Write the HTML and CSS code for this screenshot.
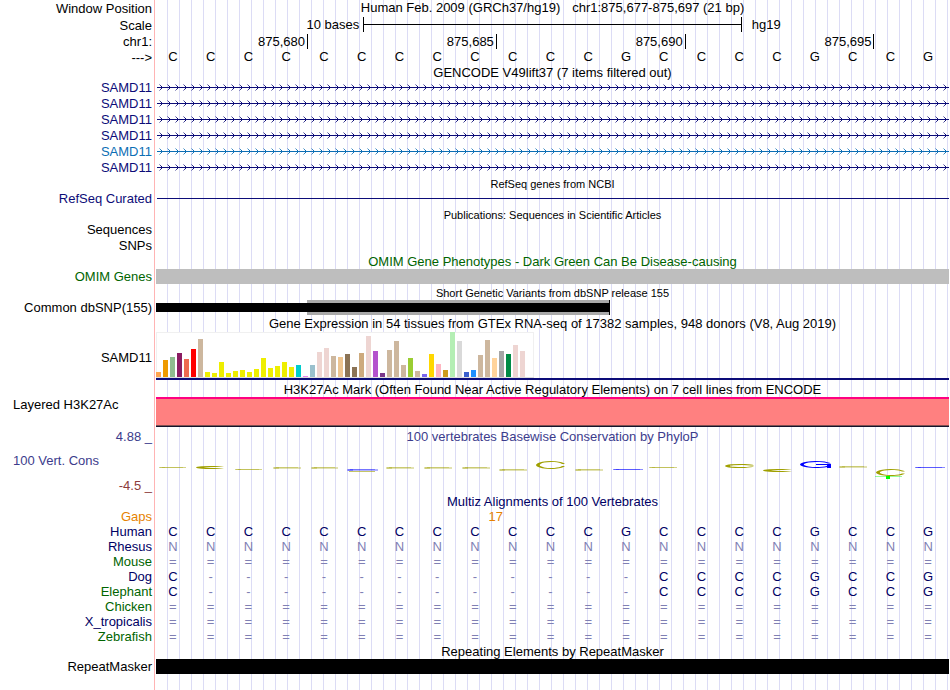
FILE: index.html
```html
<!DOCTYPE html>
<html lang="en">
<head>
    <meta charset="UTF-8">
    <meta name="viewport" content="width=device-width, initial-scale=1.0">
    <title>Human chr1:875,677-875,697</title>
    <link rel="stylesheet" href="styles.css">
</head>
<body>
    <main class="browser">
        <div class="row ruler">
            <div class="label">Window Position</div>
            <div class="title position"><span>Human Feb. 2009 (GRCh37/hg19)</span><span>chr1:875,677-875,697 (21 bp)</span></div>
        </div>
        <div class="row ruler">
            <div class="label">Scale</div>
            <div class="scale">
                <span class="scale-text">10 bases</span>
                <span class="scale-bar"></span>
                <span class="scale-db">hg19</span>
            </div>
        </div>
        <div class="row coords-row">
            <div class="label">chr1:</div>
            <div class="cells coords">
                <span class="first">875,680</span>
                <span>875,685</span>
                <span>875,690</span>
                <span>875,695</span>
            </div>
        </div>
        <div class="row bases-row">
            <div class="label">---&gt;</div>
            <div class="cells" data-seq="CCCCCCCCCCCCGCCCCGCCG"></div>
        </div>

        <div class="row short"><div class="title">GENCODE V49lift37 (7 items filtered out)</div></div>
        <div id="genes"></div>

        <div class="row short"><div class="title small">RefSeq genes from NCBI</div></div>
        <div class="row">
            <div class="label navy">RefSeq Curated</div>
            <div class="intron"></div>
        </div>

        <div class="row short"><div class="title small">Publications: Sequences in Scientific Articles</div></div>
        <div class="row"><div class="label">Sequences</div></div>
        <div class="row"><div class="label">SNPs</div></div>

        <div class="row short"><div class="title green">OMIM Gene Phenotypes - Dark Green Can Be Disease-causing</div></div>
        <div class="row">
            <div class="label green">OMIM Genes</div>
            <div class="block omim"></div>
        </div>

        <div class="row short"><div class="title small">Short Genetic Variants from dbSNP release 155</div></div>
        <div class="row">
            <div class="label">Common dbSNP(155)</div>
            <div class="cells snps">
                <div class="snp-range"></div>
                <div class="snp"></div>
            </div>
        </div>

        <div class="row"><div class="title">Gene Expression in 54 tissues from GTEx RNA-seq of 17382 samples, 948 donors (V8, Aug 2019)</div></div>
        <div class="row gtex-row">
            <div class="label">SAMD11</div>
            <div class="gtex"><div class="bars" id="bars"></div></div>
        </div>

        <div class="row short"><div class="title">H3K27Ac Mark (Often Found Near Active Regulatory Elements) on 7 cell lines from ENCODE</div></div>
        <div class="row h3k-row">
            <div class="label left">Layered H3K27Ac</div>
            <div class="h3k"></div>
        </div>

        <div class="row short">
            <div class="label cons">4.88 _</div>
            <div class="title cons">100 vertebrates Basewise Conservation by PhyloP</div>
        </div>
        <div class="row cons-row">
            <div class="cons-labels">
                <div class="label left cons">100 Vert. Cons</div>
                <div class="label low">-4.5 _</div>
            </div>
            <svg class="logo" id="logo" viewBox="0 0 793 50" preserveAspectRatio="none"></svg>
        </div>

        <div class="row short"><div class="title dark">Multiz Alignments of 100 Vertebrates</div></div>
        <div class="row short">
            <div class="label orange">Gaps</div>
            <div class="cells"><span class="gap-count">17</span></div>
        </div>
        <div id="alignments"></div>

        <div class="row short"><div class="title">Repeating Elements by RepeatMasker</div></div>
        <div class="row">
            <div class="label">RepeatMasker</div>
            <div class="block repeat"></div>
        </div>
    </main>

    <script>
        const svgNS = 'http://www.w3.org/2000/svg';

        function fillCells(container, seq) {
            for (const base of seq) {
                const cell = document.createElement('span');
                cell.textContent = base;
                if (!'CG'.includes(base)) cell.className = 'faint';
                container.appendChild(cell);
            }
        }

        document.querySelectorAll('[data-seq]').forEach(el => fillCells(el, el.dataset.seq));

        // Transcripts: the colour class is shared by the label and the intron line
        const genes = document.getElementById('genes');
        ['navy', 'navy', 'navy', 'navy', 'blue', 'navy'].forEach((color, i) => {
            genes.insertAdjacentHTML('beforeend', `
                <div class="row ${color}">
                    <div class="label">SAMD11</div>
                    <svg class="transcript" shape-rendering="crispEdges">
                        <pattern id="arrow${i}" width="8" height="16" patternUnits="userSpaceOnUse">
                            <path d="M5 6h1v1h-1zM5 8h1v1h-1zM6 7h1v1h-1z" fill="currentColor"/>
                            <path d="M4 5h1v1h-1zM4 9h1v1h-1z" fill="currentColor" opacity="0.8"/>
                            <path d="M3 4h1v1h-1zM3 10h1v1h-1z" fill="currentColor" opacity="0.4"/>
                        </pattern>
                        <rect x="1" y="7" width="100%" height="1" fill="currentColor"/>
                        <rect width="100%" height="16" fill="url(#arrow${i})"/>
                    </svg>
                </div>`);
        });

        // Median expression per tissue: [height, colour]
        const tissues = [
            [5, '#ffa54f'], [17, '#ee9a00'], [20, '#8fbc8f'], [24, '#8b1c62'], [18, '#ee6a50'], [28, '#ff0000'],
            [38, '#cdb79e'], [5, '#eeee00'], [4, '#eeee00'], [15, '#eeee00'], [4, '#eeee00'], [6, '#eeee00'],
            [7, '#eeee00'], [5, '#eeee00'], [8, '#eeee00'], [19, '#eeee00'], [9, '#eeee00'], [11, '#eeee00'],
            [15, '#eeee00'], [10, '#eeee00'], [12, '#00cdcd'], [1, '#ee82ee'], [12, '#9ac0cd'], [25, '#eed5d2'],
            [29, '#eed5d2'], [21, '#cdb79e'], [20, '#eec591'], [23, '#8b7355'], [10, '#8b7355'], [24, '#cdaa7d'],
            [41, '#eed5d2'], [26, '#b452cd'], [4, '#7a378b'], [27, '#cdb79e'], [36, '#cdb79e'], [12, '#cdb79e'],
            [19, '#9acd32'], [6, '#cdb79e'], [3, '#7a67ee'], [23, '#ffd700'], [13, '#ffb6c1'], [7, '#cd9b1d'],
            [45, '#b4eeb4'], [36, '#d9d9d9'], [5, '#3a5fcd'], [7, '#1e90ff'], [22, '#cdb79e'], [37, '#cdb79e'],
            [19, '#ffd39b'], [26, '#a6a6a6'], [23, '#008b45'], [32, '#eed5d2'], [26, '#eed5d2'], [0, '#ff00ff']
        ];
        const bars = document.getElementById('bars');
        tissues.forEach(([height, color]) => {
            const bar = document.createElement('span');
            bar.style.height = height + 'px';
            bar.style.backgroundColor = color;
            bars.appendChild(bar);
        });

        // Conservation scores: [x, top, width, height, colour]
        const olive = '#a0a000';
        const blue = '#0000ff';
        const scores = [
            [3, 23, 27, 1, olive], [40, 22, 28, 3, olive], [79, 25, 27, 1, olive], [117, 23, 28, 2, olive],
            [155, 23, 27, 2, olive], [191, 25, 31, 2, blue], [230, 23, 28, 2, olive], [268, 23, 28, 2, olive],
            [306, 23, 28, 2, olive], [343, 25, 28, 2, olive], [380, 17, 29, 8, olive], [419, 25, 28, 2, olive],
            [457, 25, 30, 1, blue], [493, 23, 28, 1, olive], [569, 20, 29, 4, olive], [607, 25, 29, 3, olive],
            [644, 17, 31, 7, blue], [683, 22, 28, 2, olive], [720, 25, 29, 7, olive], [759, 23, 30, 1, blue]
        ];
        const logo = document.getElementById('logo');

        function addPath(d, color, opacity) {
            const path = document.createElementNS(svgNS, 'path');
            path.setAttribute('d', d);
            path.setAttribute('fill', color);
            path.setAttribute('opacity', opacity);
            logo.appendChild(path);
        }

        scores.forEach(([x, y, w, h, color]) => {
            if (h < 3) {
                // low scores flatten to a bar with faded ends
                addPath(`M${x} ${y}h${w}v${h}h-${w}z`, color, h === 1 ? 0.45 : 0.3);
                addPath(`M${x + 3} ${y}h${w - 6}v1h-${w - 6}z`, color, 0.35);
                addPath(`M${x + 1} ${y}h5v${h}h-5z`, color, 0.3);
                return;
            }
            const r = x + w;
            const top = y + h * 0.36;
            const bottom = y + h * 0.64;
            addPath(`M${r} ${top}A${w / 1.96} ${h / 2} 0 1 0 ${r} ${bottom}H${r - 3}` +
                `A${(w - 7) / 1.9} ${h / 2 - 1} 0 1 1 ${r - 3} ${top}z`, color, 1);
        });
        addPath('M660 20h15v4h-4v-3h-11z', blue, 1);
        addPath('M193 27h26v1h-26z', olive, 0.6);
        addPath('M719 32h27v1h-27z', '#00ff00', 0.4);
        addPath('M730 32h4v3h-4z', '#00ff00', 1);

        // Species alignments
        const gapRow = '='.repeat(21);
        const partial = 'C' + '-'.repeat(12) + 'CCCCGCCG';
        const species = [
            ['Human', 'dark', 'CCCCCCCCCCCCGCCCCGCCG'],
            ['Rhesus', 'dark', 'N'.repeat(21)],
            ['Mouse', 'green', gapRow],
            ['Dog', 'dark', partial],
            ['Elephant', 'green', partial],
            ['Chicken', 'green', gapRow],
            ['X_tropicalis', 'dark', gapRow],
            ['Zebrafish', 'green', gapRow]
        ];
        const alignments = document.getElementById('alignments');
        species.forEach(([name, color, seq]) => {
            const row = document.createElement('div');
            row.className = 'row short';
            row.innerHTML = `<div class="label ${color}">${name}</div><div class="cells dark"></div>`;
            fillCells(row.lastElementChild, seq);
            alignments.appendChild(row);
        });
    </script>
</body>
</html>
```
FILE: styles.css
```css
* {
    box-sizing: border-box;
}

body {
    margin: 0;
    padding-right: 1px;
    background-color: #fff;
    color: #000;
    font-family: "Liberation Sans", Arial, sans-serif;
    font-size: 13px;
    line-height: 15px;
}

/* Pink divider and the light guide lines run behind every track */
.browser {
    min-height: 100vh;
    background-image:
        linear-gradient(#ffb4b4, #ffb4b4),
        repeating-linear-gradient(to right, #dcdcf5 0, #dcdcf5 1px, transparent 1px, transparent 12px);
    background-size: 1px 100%, auto;
    background-position: 154px 0, 167px 0;
    background-repeat: no-repeat;
}

.row {
    display: grid;
    grid-template-columns: 154px 1fr;
    column-gap: 2px;
    min-height: 16px;
}

.row.short {
    min-height: 15px;
}

.row.ruler {
    min-height: 17px;
}

.label {
    padding-right: 2px;
    text-align: right;
    white-space: nowrap;
}

.ruler .label,
.bases-row .label {
    padding-top: 1px;
}

.label.left {
    padding-left: 13px;
    text-align: left;
}

.title {
    grid-column: 2;
    text-align: center;
    white-space: nowrap;
}

.title.small {
    height: 15px;
    font-size: 11px;
    line-height: 17px;
}

.position span + span {
    margin-left: 12px;
}

.navy {
    color: #0c0c78;
}

.blue {
    color: #0c6eb4;
}

.green {
    color: #006400;
}

.dark {
    color: #000064;
}

.cons {
    color: #3c3c8c;
}

.low {
    color: #8c3c3c;
}

.orange,
.gap-count {
    color: #e68200;
}

/* Scale and coordinates */
.scale {
    display: grid;
    grid-template-columns: 1fr calc(47.6% + 1px) 1fr;
}

.scale-text {
    padding-right: 4px;
    text-align: right;
}

.scale-bar {
    height: 15px;
    border: solid #000;
    border-width: 0 1px;
    background: linear-gradient(#000, #000) 0 7px / 100% 1px no-repeat;
}

.scale-db {
    padding-left: 10px;
}

.cells {
    display: grid;
    grid-template-columns: repeat(21, 1fr);
}

.cells span {
    padding-right: 4px;
    text-align: center;
}

.coords-row {
    min-height: 15px;
}

.coords span {
    grid-column: span 5;
    height: 15px;
    margin-right: -1px;
    padding-right: 2px;
    border-right: 1px solid #000;
    text-align: right;
}

.coords .first {
    grid-column: span 4;
}

.cells .faint {
    color: #8080b4;
}

.cells .gap-count {
    grid-column: 9 / span 2;
    padding-right: 0;
}

/* Gene tracks */
.transcript {
    display: block;
    width: 100%;
    height: 16px;
}

.intron {
    height: 1px;
    margin: 7px 0 0 1px;
    background-color: #0c0c78;
}

.block {
    height: 15px;
}

.omim {
    background-color: #bebebe;
}

.repeat {
    background-color: #000;
}

.snps {
    height: 15px;
    align-items: center;
}

.snp-range {
    grid-column: 5 / 13;
    grid-row: 1;
    height: 15px;
    margin-right: -1px;
    background-color: #a9a9a9;
    border-right: 1px solid #000;
}

.snp {
    grid-column: 1 / 13;
    grid-row: 1;
    height: 9px;
    background-color: #000;
}

/* GTEx expression */
.gtex-row {
    min-height: 50px;
}

.gtex-row .label {
    padding-top: 18px;
}

.gtex {
    height: 48px;
    border-bottom: 2px solid #0c0c78;
}

.bars {
    display: flex;
    align-items: flex-end;
    gap: 2px;
    width: 378px;
    height: 46px;
    background-color: #fff;
    border-bottom: 1px solid #dcdcdc;
    box-shadow: inset 0 1px #f0f0f0, inset 1px 0 #f0f0f0, inset -1px 0 #f0f0f0;
}

.bars span {
    width: 5px;
}

.h3k-row {
    min-height: 32px;
}

.h3k {
    height: 30px;
    background-color: #ff8080;
    border-top: 2px solid #ff0080;
    border-bottom: 1px solid #14142d;
    box-shadow: inset 0 -1px #805050;
}

/* Conservation */
.cons-row {
    min-height: 50px;
}

.cons-labels {
    display: flex;
    flex-direction: column;
    justify-content: space-between;
    padding: 9px 0 1px;
}

.logo {
    display: block;
    width: 100%;
    height: 50px;
}
```
